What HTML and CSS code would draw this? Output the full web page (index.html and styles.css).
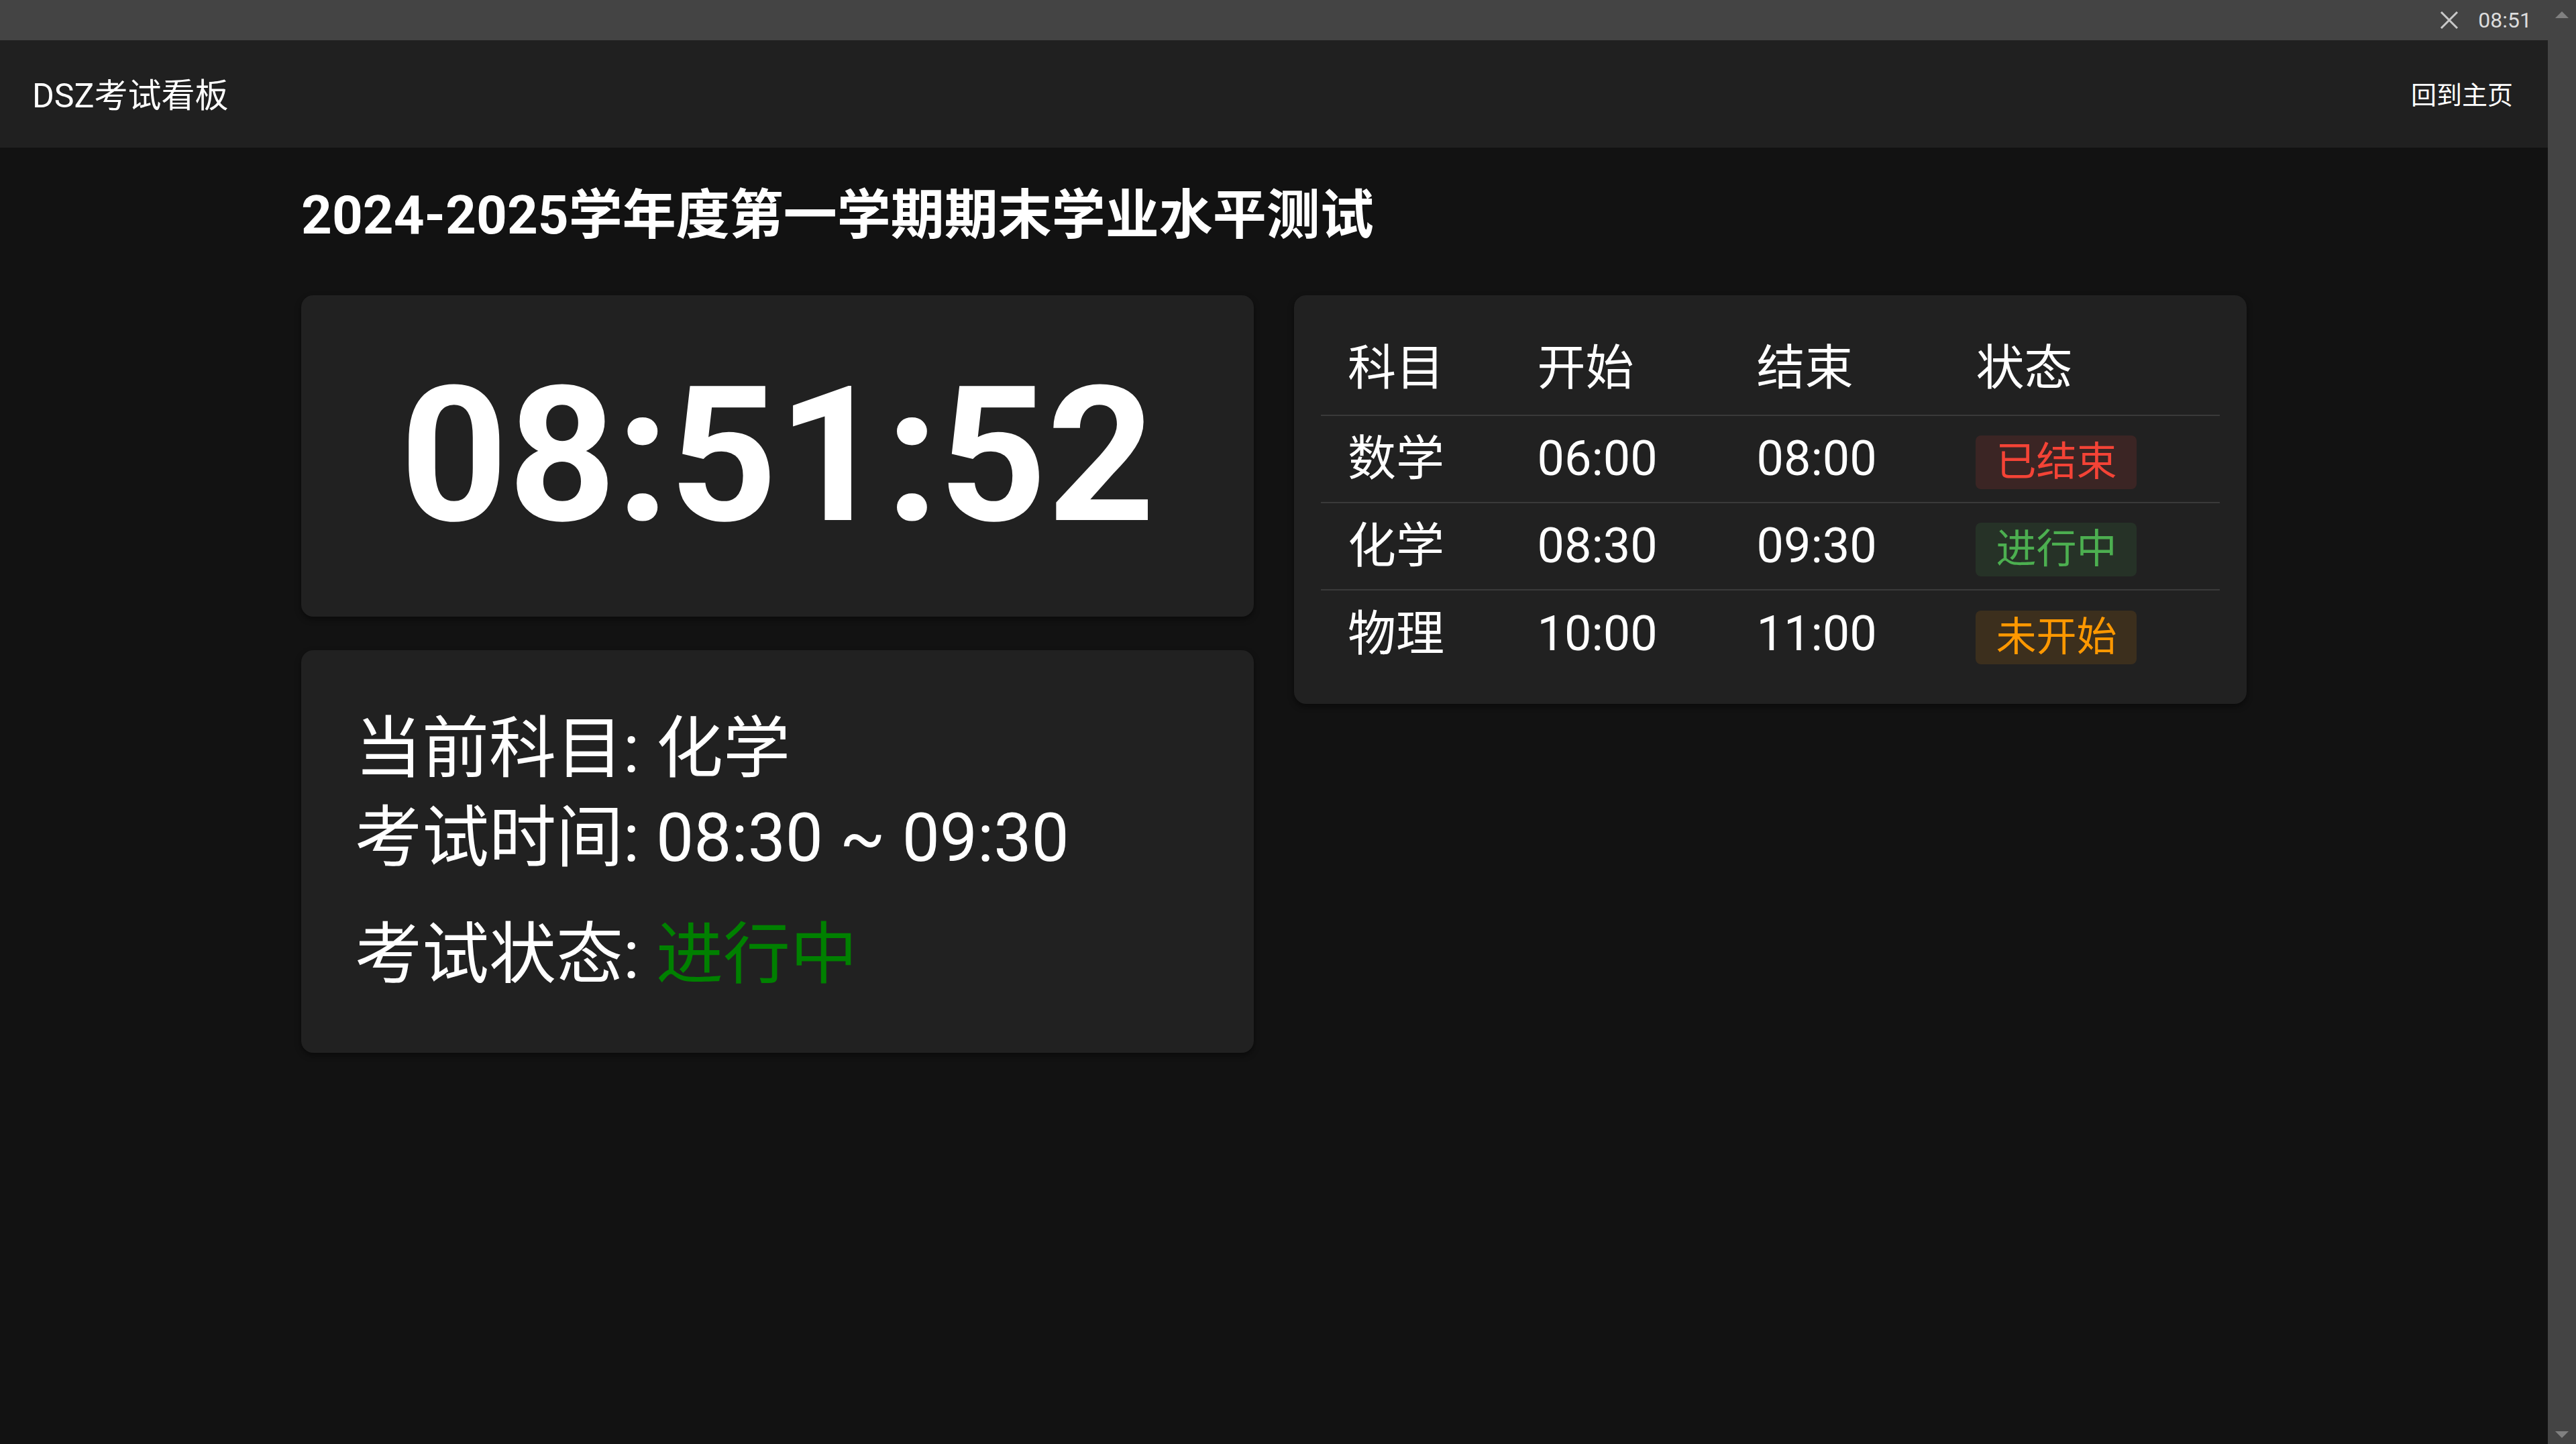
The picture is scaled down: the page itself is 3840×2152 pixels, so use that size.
FILE: index.html
```html
<!DOCTYPE html>
<html lang="zh-CN">
<head>
<meta charset="utf-8">
<title>DSZ考试看板</title>
<link rel="stylesheet" href="styles.css">
</head>
<body>
<div class="window">
  <div class="page">
    <div class="topbar">
      <svg class="close-icon" width="28" height="26" viewBox="0 0 28 26"><path d="M2 1 L26 25 M26 1 L2 25" stroke="#c8c8c8" stroke-width="3" fill="none"/></svg>
      <span class="sys-time">08:51</span>
    </div>
    <header class="appbar">
      <div class="app-title">DSZ考试看板</div>
      <a class="home-link">回到主页</a>
    </header>
    <main class="content">
      <h1 class="exam-title">2024-2025学年度第一学期期末学业水平测试</h1>
      <div class="grid">
        <div class="left-col">
          <div class="card clock-card">
            <div class="clock">08:51:52</div>
          </div>
          <div class="card info-card">
            <div class="info-line">当前科目: 化学</div>
            <div class="info-line">考试时间: 08:30 ~ 09:30</div>
            <div class="info-line status-line">考试状态: <span class="status-green">进行中</span></div>
          </div>
        </div>
        <div class="card table-card">
          <table class="schedule">
            <thead>
              <tr><th>科目</th><th>开始</th><th>结束</th><th>状态</th></tr>
            </thead>
            <tbody>
              <tr><td>数学</td><td>06:00</td><td>08:00</td><td><span class="badge badge-done">已结束</span></td></tr>
              <tr><td>化学</td><td>08:30</td><td>09:30</td><td><span class="badge badge-live">进行中</span></td></tr>
              <tr><td>物理</td><td>10:00</td><td>11:00</td><td><span class="badge badge-wait">未开始</span></td></tr>
            </tbody>
          </table>
        </div>
      </div>
    </main>
  </div>
  <div class="scrollbar">
    <span class="arrow-up"></span>
    <span class="arrow-down"></span>
  </div>
</div>
</body>
</html>
```
FILE: styles.css
```css
* { box-sizing: border-box; }
html, body {
  margin: 0;
  padding: 0;
  height: 100%;
  overflow: hidden;
}
body {
  background: #121212;
  color: #fff;
  font-family: "Roboto", "Noto Sans CJK SC", sans-serif;
}
.window {
  display: flex;
  height: 2152px;
}
.page {
  flex: 1;
  display: flex;
  flex-direction: column;
  min-width: 0;
}
.topbar {
  height: 60px;
  background: #444444;
  display: flex;
  justify-content: flex-end;
  align-items: center;
  gap: 29px;
  padding-right: 24px;
}
.close-icon { display: block; }
.sys-time {
  font-size: 32px;
  color: #dcdcdc;
  line-height: 1;
}
.appbar {
  height: 160px;
  background: #202020;
  display: flex;
  align-items: center;
  justify-content: space-between;
  padding: 0 52px 0 48px;
}
.app-title {
  font-size: 50px;
  color: #fff;
  position: relative;
  top: -2px;
}
.home-link {
  font-size: 38px;
  color: #fff;
  cursor: pointer;
  position: relative;
  top: -2px;
}
.content {
  width: 2900px;
  margin: 0 auto;
}
.exam-title {
  font-size: 80px;
  font-weight: 700;
  line-height: 96px;
  margin: 53px 0 71px;
}
.grid {
  display: grid;
  grid-template-columns: 1fr 1fr;
  gap: 60px;
  align-items: start;
}
.left-col {
  display: flex;
  flex-direction: column;
  gap: 50px;
}
.card {
  background: #212121;
  border-radius: 18px;
  box-shadow: 0 4px 10px rgba(0, 0, 0, 0.45);
}
.clock-card {
  padding: 80px;
  text-align: center;
}
.clock {
  font-size: 281px;
  font-weight: 700;
  line-height: 319px;
}
.info-card {
  padding: 80px;
}
.info-line {
  font-size: 100px;
  line-height: 133px;
}
.status-line { margin-top: 41px; }
.status-green { color: #008000; }
.table-card {
  padding: 40px;
}
.schedule {
  width: 100%;
  border-collapse: collapse;
  font-size: 72px;
}
.schedule th {
  font-weight: 400;
  text-align: left;
  padding: 0 40px;
  height: 139px;
  border-bottom: 2px solid #3a3a3a;
  line-height: 80px;
}
.schedule td {
  padding: 0 40px;
  height: 130px;
  line-height: 80px;
  vertical-align: middle;
}
.schedule tbody tr + tr td { border-top: 2px solid #3a3a3a; }
.badge {
  display: inline-block;
  font-size: 60px;
  line-height: 70px;
  padding: 5px 30px;
  border-radius: 8px;
  vertical-align: -6px;
}
.badge-done { color: #f44336; background: rgba(244, 67, 54, 0.12); }
.badge-live { color: #4caf50; background: rgba(76, 175, 80, 0.12); }
.badge-wait { color: #ff9800; background: rgba(255, 152, 0, 0.12); }
.scrollbar {
  width: 42px;
  background: #444444;
  display: flex;
  flex-direction: column;
  justify-content: space-between;
  align-items: center;
  padding: 17px 0 9px;
}
.arrow-up {
  width: 0; height: 0;
  border-left: 10px solid transparent;
  border-right: 10px solid transparent;
  border-bottom: 10px solid #808080;
}
.arrow-down {
  width: 0; height: 0;
  border-left: 10px solid transparent;
  border-right: 10px solid transparent;
  border-top: 10px solid #808080;
}
```
